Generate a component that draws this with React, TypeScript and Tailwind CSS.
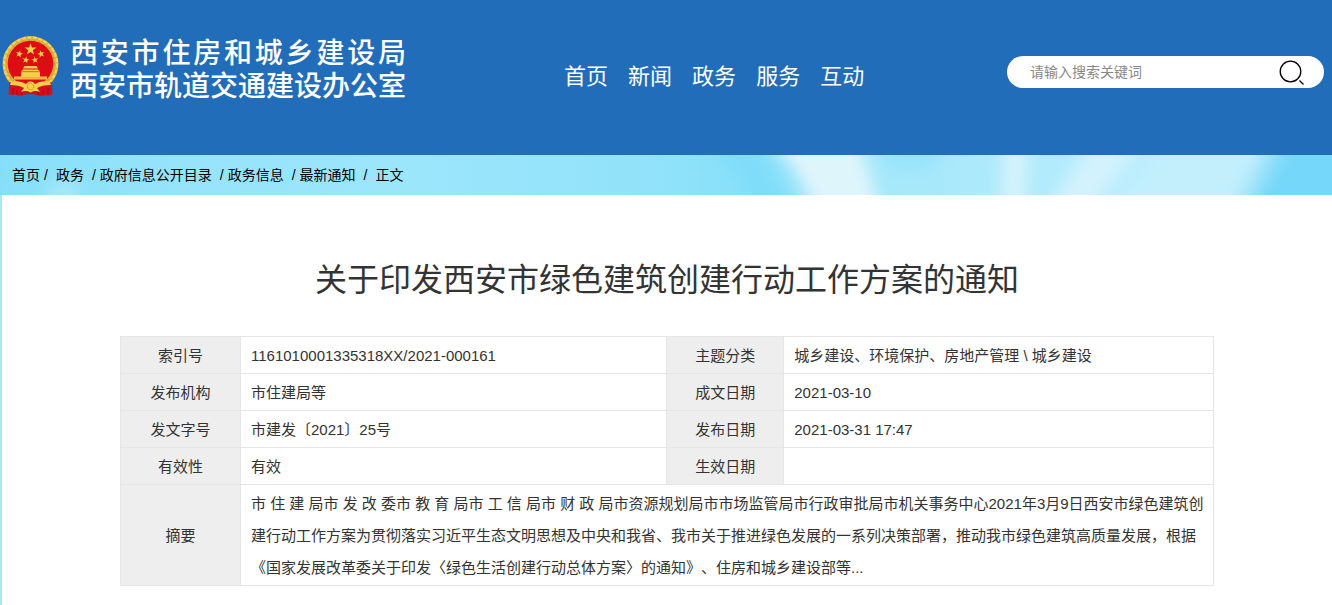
import type { ReactNode } from 'react';

const NAV = ['首页', '新闻', '政务', '服务', '互动'];

const CRUMBS = [
  { label: '首页', sep: '' },
  { label: '政务', sep: 'ml-1 mr-2' },
  { label: '政府信息公开目录', sep: 'ml-2 mr-1' },
  { label: '政务信息', sep: 'ml-2 mr-1' },
  { label: '最新通知', sep: 'ml-2 mr-1' },
  { label: '正文', sep: 'ml-2 mr-2' },
];

const ROWS = [
  ['索引号', '1161010001335318XX/2021-000161', '主题分类', '城乡建设、环境保护、房地产管理 \\ 城乡建设'],
  ['发布机构', '市住建局等', '成文日期', '2021-03-10'],
  ['发文字号', '市建发〔2021〕25号', '发布日期', '2021-03-31 17:47'],
  ['有效性', '有效', '生效日期', ''],
];

const SUMMARY =
  '市 住 建 局市 发 改 委市 教 育 局市 工 信 局市 财 政 局市资源规划局市市场监管局市行政审批局市机关事务中心2021年3月9日西安市绿色建筑创建行动工作方案为贯彻落实习近平生态文明思想及中央和我省、我市关于推进绿色发展的一系列决策部署，推动我市绿色建筑高质量发展，根据《国家发展改革委关于印发〈绿色生活创建行动总体方案〉的通知》、住房和城乡建设部等...';

const STAR = '0,-1 .225,-.309 .951,-.309 .363,.118 .588,.809 0,.382 -.588,.809 -.363,.118 -.951,-.309 -.225,-.309';

function Emblem() {
  return (
    <svg viewBox="0 0 60 62" className="h-[62px] w-[60px] shrink-0" role="img" aria-label="国徽">
      <circle cx="30.500" cy="29" r="28" fill="#dfb03a" />
      <circle cx="30.500" cy="29" r="26.500" fill="none" stroke="#f1d468" strokeWidth="2" strokeDasharray="4 1.500" />
      <circle cx="30.500" cy="29" r="24" fill="none" stroke="#c08a26" strokeWidth="1" strokeDasharray="1.500 4" />
      <circle cx="30.500" cy="28.500" r="22.800" fill="#e00c14" />
      <path d="M9.500 47 L8.500 59 Q12 61 15 59.500 Q19 61.500 23 60 Q30 58 37 60 Q41 62 45 60 Q49 62 52.500 59 L51.500 47 Q30 52 9.500 47Z" fill="#d3101a" />
      <path d="M13 53v6M17 55v5M22 56v4M38 56v4M43 55v5M48 53v6" stroke="#8f1018" strokeWidth="1" />
      <g fill="#f5cf4a">
        <polygon points={STAR} transform="translate(30.500 14.500) scale(6.300)" />
        <polygon points={STAR} transform="translate(19.300 19) rotate(15) scale(3.900)" />
        <polygon points={STAR} transform="translate(41 19) rotate(-15) scale(3.900)" />
        <polygon points={STAR} transform="translate(25.800 25) rotate(10) scale(3.700)" />
        <polygon points={STAR} transform="translate(35 25) rotate(-10) scale(3.700)" />
        <path d="M24.500 31h12l1.500 2.500H23zM23 34.500h15l2 2H21zM21 37h19v4.500H21zM14 41.500h33v3H14z" />
        <path d="M11 47 Q20 45 26 49 L35 49 Q41 45 50 47 L51 50 Q42 50 37 53 L40 57 Q35 55 30.500 57.500 Q26 55 21 57 L24 53 Q19 50 10 50Z" />
        <circle cx="30.500" cy="51.500" r="5" />
      </g>
      <path d="M21 36.800h19M14 43h33" stroke="#c88a22" strokeWidth=".7" />
      <circle cx="30.500" cy="51.500" r="3.200" fill="none" stroke="#c98a1c" strokeWidth="1" strokeDasharray="1.500 1" />
    </svg>
  );
}

function Sky() {
  return (
    <svg viewBox="0 0 1332 40" preserveAspectRatio="none" className="absolute inset-0 h-full w-full" aria-hidden="true">
      <defs>
        <linearGradient id="sky">
          <stop offset="0" stopColor="#86dffa" />
          <stop offset=".12" stopColor="#95e3fb" />
          <stop offset=".3" stopColor="#9ce6fb" />
          <stop offset=".5" stopColor="#90e2fa" />
          <stop offset=".57" stopColor="#86dff9" />
          <stop offset=".62" stopColor="#a5e8fb" />
          <stop offset=".7" stopColor="#a8e8fb" />
          <stop offset=".85" stopColor="#b9edfd" />
          <stop offset=".93" stopColor="#a4e5fb" />
          <stop offset="1" stopColor="#76d7f9" />
        </linearGradient>
        <filter id="soft" filterUnits="userSpaceOnUse" x="-60" y="-60" width="1460" height="160">
          <feGaussianBlur stdDeviation="8" />
        </filter>
      </defs>
      <rect width="1332" height="40" fill="url(#sky)" />
      <g filter="url(#soft)">
        <path d="M690 -40H735L805 70H760L740 25Z" fill="#80ddf9" />
        <path d="M750 -40H850L885 70H825L795 15Z" fill="#dff5fc" />
        <path d="M865 -40H960L930 14H890Z" fill="#97e3fa" />
        <path d="M1004 -40H1030L1024 80H1000Z" fill="#d5f3fd" />
        <path d="M1110 -40H1160L1075 80H1030Z" fill="#d3f2fd" />
        <path d="M1175 -40H1285L1215 80H1100Z" fill="#c3effd" />
        <path d="M1310 -40H1400V80H1235Z" fill="#75d7f9" />
        <path d="M50 30L72 22L90 70H35Z" fill="#a6e8fb" />
      </g>
    </svg>
  );
}

function Label({ children }: { children: ReactNode }) {
  return (
    <th scope="row" className="border border-[#e6e6e6] bg-[#eee] pt-[2px] text-center font-normal">
      {children}
    </th>
  );
}

export default function App() {
  return (
    <div className="flex min-h-screen flex-col bg-[#a8e8fb] font-['Liberation_Sans','Noto_Sans_CJK_SC',sans-serif] text-[#333] [text-spacing-trim:space-all]">
      <header className="flex items-start bg-[#226dba] pt-[35px] pr-2 pb-[52px] text-white">
        <a href="#" className="flex w-[42%] gap-[10px]">
          <Emblem />
          <span className="w-[336px] pt-[2px] text-[28px] leading-[33px] font-medium">
            <span className="block whitespace-nowrap [text-align-last:justify]">西安市住房和城乡建设局</span>
            <span className="block whitespace-nowrap">西安市轨道交通建设办公室</span>
          </span>
        </a>
        <nav className="flex gap-5 pt-[26px] pl-2 text-[22px] leading-8">
          {NAV.map((item) => (
            <a key={item} href="#">
              {item}
            </a>
          ))}
        </nav>
        <form className="mt-[21px] ml-auto flex h-8 w-[317px] items-center rounded-full bg-white pr-5 pl-[23px]">
          <input
            type="text"
            aria-label="搜索"
            placeholder="请输入搜索关键词"
            className="min-w-0 flex-1 bg-transparent text-sm text-[#333] outline-none placeholder:text-[#888]"
          />
          <button type="button" aria-label="搜索" className="text-black">
            <svg viewBox="0 0 26 26" className="size-[26px]" fill="none" stroke="currentColor" strokeWidth="1.300">
              <circle cx="12.500" cy="12.500" r="10.300" />
              <path d="M21.500 21.500L25.500 25.500" />
            </svg>
          </button>
        </form>
      </header>

      <nav aria-label="面包屑" className="relative h-10 text-sm leading-10 text-black">
        <Sky />
        <ol className="relative flex pl-3">
          {CRUMBS.map(({ label, sep }) => (
            <li key={label} className="flex">
              {sep && <span className={sep}>/</span>}
              <a href="#">{label}</a>
            </li>
          ))}
        </ol>
      </nav>

      <main className="ml-[2px] flex-1 bg-white px-[118px] pt-[61px] pb-5">
        <h1 className="mb-8 text-center text-[32px] leading-[48px]">关于印发西安市绿色建筑创建行动工作方案的通知</h1>
        <table className="w-full table-fixed border-collapse text-[15px] leading-8">
          <colgroup>
            <col className="w-[120px]" />
            <col className="w-[39%]" />
            <col className="w-[117px]" />
            <col />
          </colgroup>
          <tbody>
            {ROWS.map(([a, b, c, d]) => (
              <tr key={a} className="h-[37px]">
                <Label>{a}</Label>
                <td className="border border-[#e6e6e6] px-[10px] pt-[2px]">{b}</td>
                <Label>{c}</Label>
                <td className="border border-[#e6e6e6] px-[10px] pt-[2px]">{d}</td>
              </tr>
            ))}
            <tr>
              <Label>摘要</Label>
              <td colSpan={3} className="border border-[#e6e6e6] pt-[3px] pr-[5px] pb-px pl-[10px]">
                {SUMMARY}
              </td>
            </tr>
          </tbody>
        </table>
      </main>
    </div>
  );
}
